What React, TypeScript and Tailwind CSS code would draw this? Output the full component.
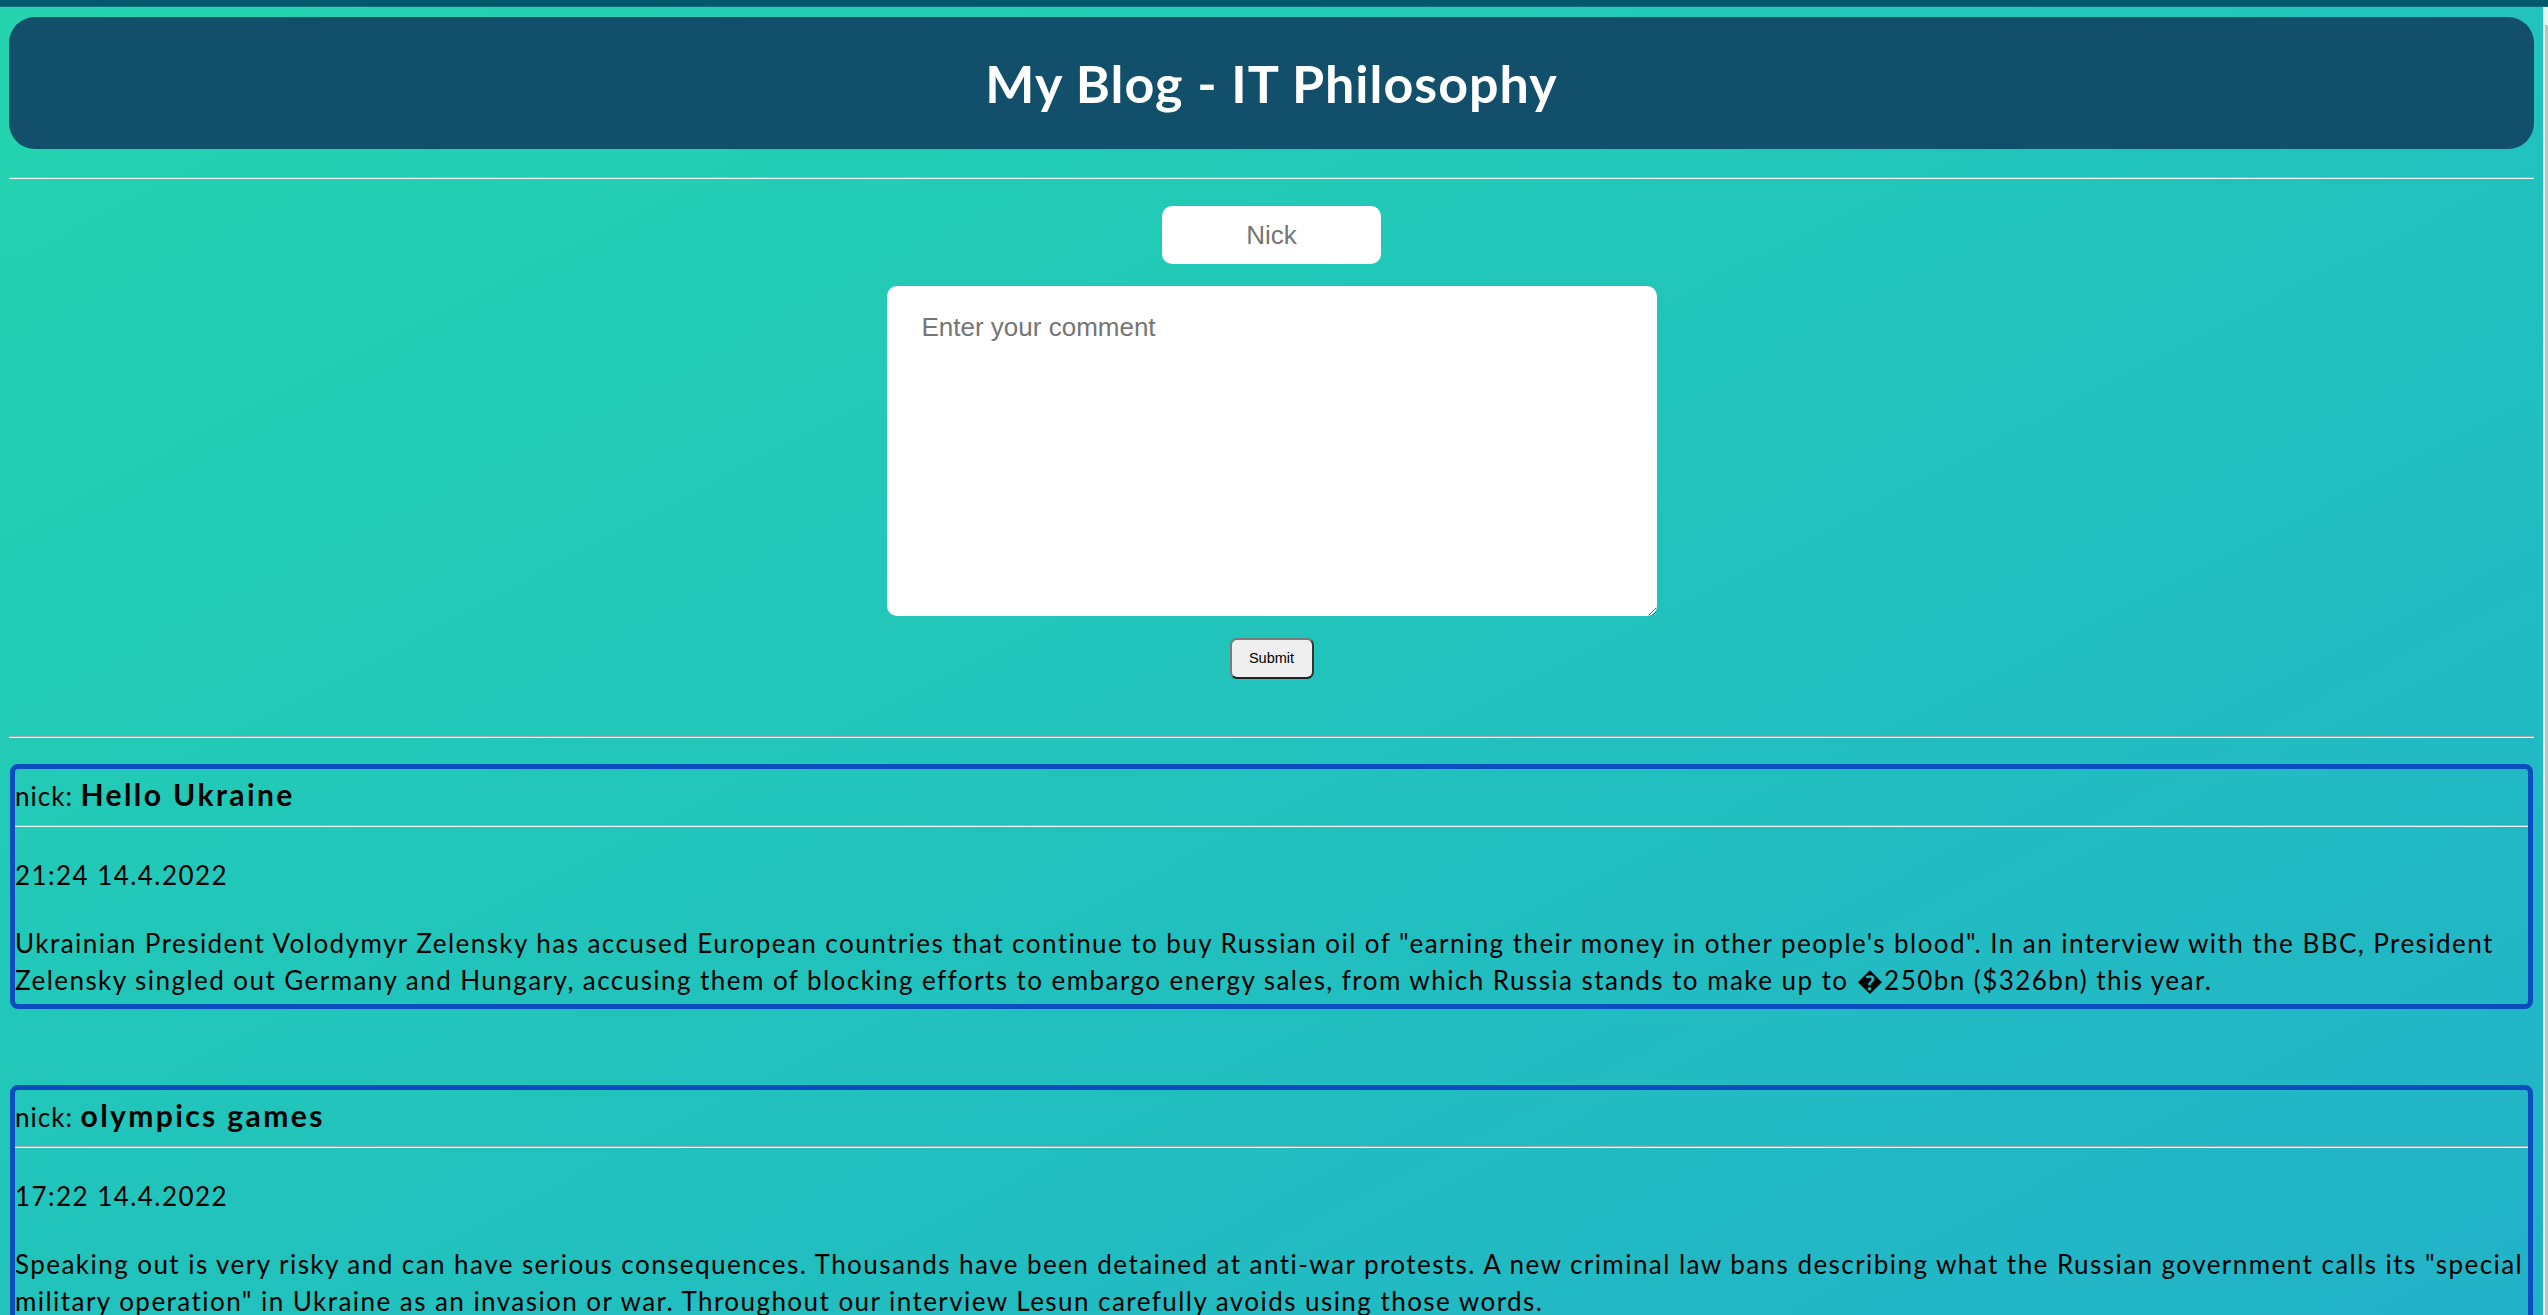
import React from 'react'

type Post = {
  author: string
  title: string
  time: string
  lines: string[]
}

const posts: Post[] = [
  {
    author: 'nick',
    title: 'Hello Ukraine',
    time: '21:24 14.4.2022',
    lines: [
      'Ukrainian President Volodymyr Zelensky has accused European countries that continue to buy Russian oil of "earning their money in other people\'s blood". In an interview with the BBC, President',
      'Zelensky singled out Germany and Hungary, accusing them of blocking efforts to embargo energy sales, from which Russia stands to make up to \uFFFD250bn ($326bn) this year.',
    ],
  },
  {
    author: 'nick',
    title: 'olympics games',
    time: '17:22 14.4.2022',
    lines: [
      'Speaking out is very risky and can have serious consequences. Thousands have been detained at anti-war protests. A new criminal law bans describing what the Russian government calls its "special',
      'military operation" in Ukraine as an invasion or war. Throughout our interview Lesun carefully avoids using those words.',
    ],
  },
]

const Rule: React.FC = () => (
  <div className="h-0 border-t border-b border-t-[#a9a9a9] border-b-[#f4f4f4]" />
)

const PostCard: React.FC<{ post: Post }> = ({ post }) => (
  <article className="mx-px border-[5px] border-[#0b4cbf] rounded-[8px]">
    <div className="pt-[7px] text-[30px] leading-[36px] whitespace-nowrap">
      <span className="text-[26px] tracking-[1px]">{post.author}: </span>
      <span className="font-bold tracking-[2.4px]">{post.title}</span>
    </div>
    <div className="mt-[11px]">
      <Rule />
    </div>
    <p className="mt-[30px] text-[26px] leading-[36px] tracking-[1.45px]">{post.time}</p>
    <div className="mt-[32px] pb-[5px] text-[26px] leading-[37px] tracking-[1.45px]">
      {post.lines.map((line, i) => (
        <div key={i} className="whitespace-nowrap">
          {line}
        </div>
      ))}
    </div>
  </article>
)

const App: React.FC = () => {
  return (
    <div className="h-screen overflow-hidden flex flex-col bg-[#22c4bb]">
      {/* top strip */}
      <div className="h-[7px] shrink-0 bg-[#03596b] border-b border-[#0f6f7c]" />

      <div className="flex flex-1 min-h-0">
        <main className="flex-1 min-w-0 px-[9px] pt-[10px] bg-linear-to-br from-[#24d4ae] to-[#22b2c8] font-['Lato',sans-serif] text-black">
          <header className="h-[132px] rounded-[26px] bg-[#114f6b] flex items-center justify-center">
            <h1 className="text-[52px] font-bold tracking-[1px] text-white">My Blog - IT Philosophy</h1>
          </header>

          <div className="mt-[28px]">
            <Rule />
          </div>

          {/* comment form */}
          <form className="flex flex-col items-center" onSubmit={(e) => e.preventDefault()}>
            <input
              placeholder="Nick"
              className="mt-[27px] w-[219px] h-[58px] rounded-[10px] bg-white text-center text-[26px] font-['Liberation_Sans',Arial,sans-serif] text-[#333] placeholder:text-[#757575] outline-none"
            />
            <textarea
              placeholder="Enter your comment"
              className="mt-[22px] w-[770px] h-[330px] rounded-[10px] bg-white pt-[22px] pl-[35px] pr-[20px] text-[26px] font-['Liberation_Sans',Arial,sans-serif] text-[#333] placeholder:text-[#757575] outline-none"
            />
            <button
              type="submit"
              className="mt-[22px] w-[84px] h-[41px] rounded-[7px] bg-[#efefef] border-2 border-t-[#7a7a7a] border-l-[#7a7a7a] border-r-[#333] border-b-[#222] text-[14.5px] text-black font-['Liberation_Sans',Arial,sans-serif]"
            >
              Submit
            </button>
          </form>

          <div className="mt-[57px]">
            <Rule />
          </div>

          {/* posts */}
          <section className="mt-[26px] flex flex-col gap-[76px]">
            {posts.map((post, i) => (
              <PostCard key={i} post={post} />
            ))}
          </section>
        </main>

        {/* scrollbar edge */}
        <div className="w-[5px] shrink-0 bg-[#f1f1f1] flex flex-col">
          <div className="mt-[18px] ml-[2px] flex-1 bg-[#c1c1c1]" />
        </div>
      </div>
    </div>
  )
}

export default App
